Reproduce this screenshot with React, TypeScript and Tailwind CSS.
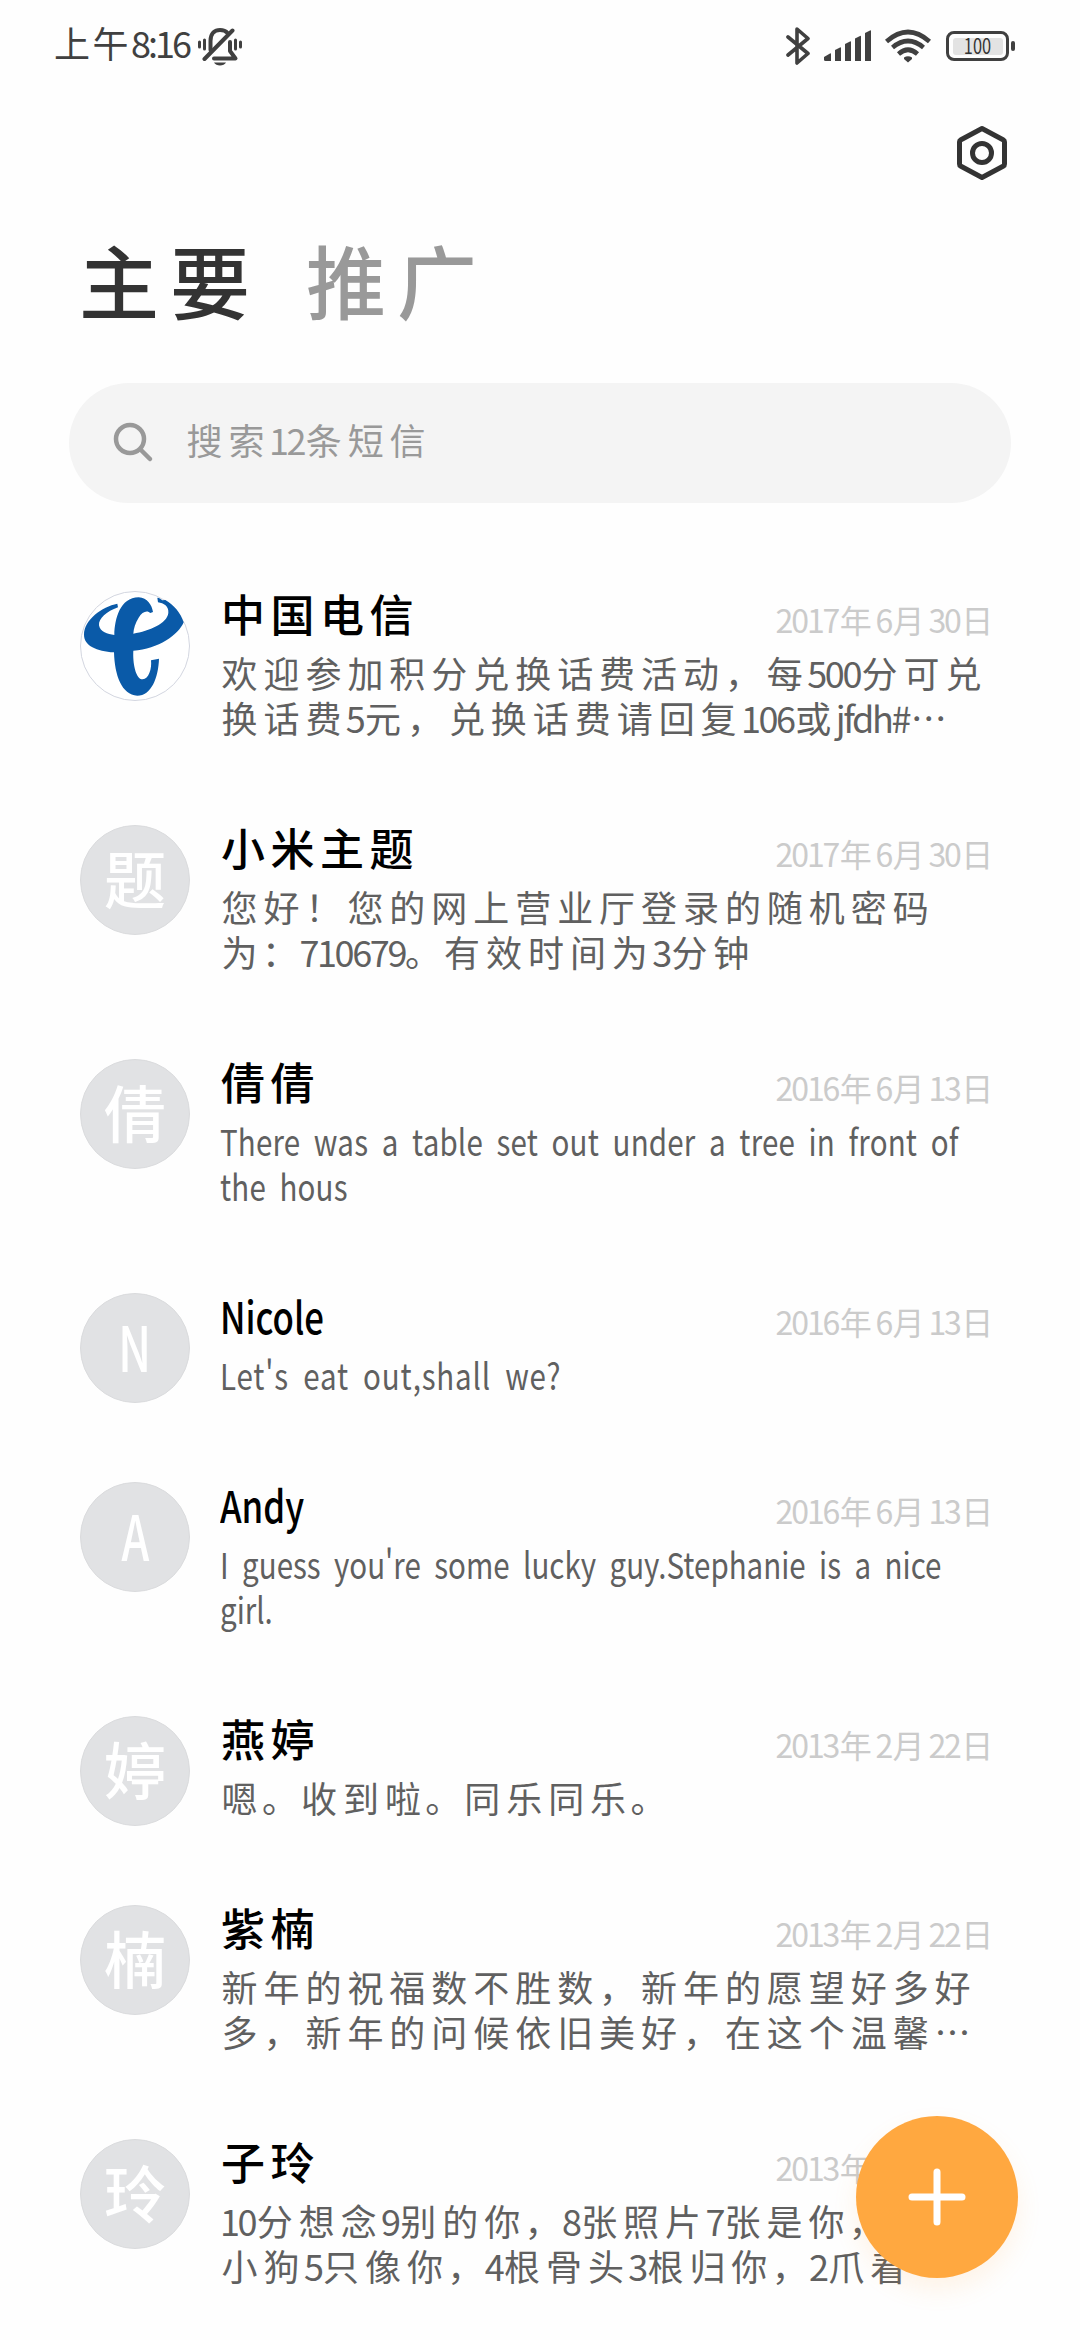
import React from 'react';

interface Thread {
    name: string;
    avatar: string;
    date: string;
    lines: string[];
    tracking?: string;
}

const threads: Thread[] = [
    {
        name: '中国电信',
        avatar: 'telecom',
        date: '2017年6月30日',
        lines: ['欢迎参加积分兑换话费活动，每500分可兑', '换话费5元，兑换话费请回复106或jfdh#…'],
    },
    {
        name: '小米主题',
        avatar: '题',
        date: '2017年6月30日',
        lines: ['您好！您的网上营业厅登录的随机密码', '为：710679。有效时间为3分钟'],
    },
    {
        name: '倩倩',
        avatar: '倩',
        date: '2016年6月13日',
        lines: ['There was a table set out under a tree in front of', 'the hous'],
        tracking: 'tracking-[0.2px]',
    },
    {
        name: 'Nicole',
        avatar: 'N',
        date: '2016年6月13日',
        lines: ["Let's eat out,shall we?"],
        tracking: 'tracking-[1px]',
    },
    {
        name: 'Andy',
        avatar: 'A',
        date: '2016年6月13日',
        lines: ["I guess you're some lucky guy.Stephanie is a nice", 'girl.'],
        tracking: 'tracking-normal',
    },
    { name: '燕婷', avatar: '婷', date: '2013年2月22日', lines: ['嗯。收到啦。同乐同乐。'] },
    {
        name: '紫楠',
        avatar: '楠',
        date: '2013年2月22日',
        lines: ['新年的祝福数不胜数，新年的愿望好多好', '多，新年的问候依旧美好，在这个温馨…'],
    },
    {
        name: '子玲',
        avatar: '玲',
        date: '2013年2月22日',
        lines: ['10分想念9别的你，8张照片7张是你，6只', '小狗5只像你，4根骨头3根归你，2爪着…'],
    },
];

const isLatin = (s: string) => /^[\x20-\x7e]+$/.test(s);

// Chinese is spaced wide, digits and letters inside it are set tight,
// full stops and colons get a little less room than a character
const trackingFor = (part: string) => {
    if (isLatin(part)) return 'tracking-[-0.066em]';
    if (/^[。：，]$/.test(part)) return 'tracking-[0.04em]';
    return 'tracking-[0.165em] ml-[0.045em] -mr-[0.045em]';
};

const Mixed: React.FC<{ text: string }> = ({ text }) => (
    <>
        {text.split(/([\x20-\x7e]+|[。：]|，(?=\d))/).filter(Boolean).map((part, i) => (
            <span key={i} className={trackingFor(part)}>{part}</span>
        ))}
    </>
);

const TelecomLogo = () => (
    <svg viewBox="60 62 330 330" className="w-[110px] h-[110px]">
        <circle cx="225" cy="227" r="163.5" fill="#fff" stroke="#d3d6e0" strokeWidth="3" />
        <path
            fill="#0a5aa8"
            d="M172 100L174 111C140 123 115 145 117 165C120 185 143 192 163 194C164 145 180 82 236 81C262 82 276 105 279 125L271 128C262 118 246 124 236 142C226 158 221 174 220 190C268 182 321 160 325 128C327 108 311 98 294 96L292 82C299 83 303 86 307 90L316 89C342 104 361 126 371 156C355 194 296 236 220 241C218 275 226 327 248 327C266 327 276 295 273 270L297 265C295 322 274 376 232 376C185 374 164 315 162 246C110 243 72 226 72 193C72 148 126 109 172 100Z"
        />
    </svg>
);

const StatusBar = () => (
    <div className="flex h-[88px] items-center pl-[54px] pr-[65px] text-[#404040]">
        <div className="flex-1 flex items-center">
            <span className="text-[36px] leading-[44px] w-[144px] whitespace-nowrap -mt-1">
                <span className="tracking-[2.5px]">上午</span>
                <span className="tracking-[-3px]">8:16</span>
            </span>
            <svg viewBox="0 0 44 38" className="w-[44px] h-[38px] mt-[6px]" fill="none" stroke="currentColor" strokeLinecap="round" strokeWidth="3">
                <path d="M1.5 14v5M6.5 12v9M37.5 12v9M42.5 14v5" />
                <path strokeWidth="4" d="M12.5 22V13C12.5 5 17 2 22 2c3.500 0 6 1.200 7.500 3" />
                <path strokeWidth="4" d="M6.500 31L34.500 2.500" />
                <path strokeWidth="4" strokeLinejoin="round" d="M32 14v9l5.500 7.500H16" />
                <path d="M16 34.500h12c-2 4-10 4-12 0z" fill="currentColor" stroke="none" />
            </svg>
        </div>
        <div className="flex items-center mt-1">
            <svg viewBox="0 0 24 38" className="w-[24px] h-[38px]" fill="none" stroke="currentColor" strokeWidth="3.6" strokeLinecap="round" strokeLinejoin="round">
                <path d="M2 10l20 16.500L11 36V2l11 9.500L2 28" />
            </svg>
            <svg viewBox="0 0 48 32" className="w-[48px] h-[32px] ml-[14px]" fill="currentColor">
                <path d="M0 27l6-3.500q1-.5 1 .5v7H1.500Q0 31 0 29.500z" />
                <path d="M11 20l5-2.500q1-.5 1 .5v13h-6z" />
                <path d="M21 14l5-2.500q1-.5 1 .5v19h-6z" />
                <path d="M31 8.500l5-2.500q1-.5 1 .5V31h-6z" />
                <path d="M41 3l5-2.500q1-.5 1 .5v30h-6z" />
            </svg>
            <svg viewBox="0 0 46 34" className="w-[46px] h-[34px] ml-[13px]" fill="none" stroke="currentColor" strokeWidth="4.6">
                <path d="M1.500 12.500Q23-6.500 44.500 12.500" />
                <path d="M7.500 18.500Q23 5.500 38.500 18.500" />
                <path d="M13.500 25Q23 16.500 32.500 25" />
                <path d="M19 28.500q4-2.500 8 0v1.500l-4 3.500-4-3.500z" fill="currentColor" stroke="none" />
            </svg>
            <div className="ml-[15px] w-[63px] h-[30px] rounded-[8px] border-[3px] border-[#404040] p-[3.5px]">
                <div className="w-full h-full rounded-[3px] bg-[#e3e3e3] flex items-center justify-center text-[21px] leading-none text-[#333]">
                    <span className="scale-x-[0.78] -mt-[2px]">100</span>
                </div>
            </div>
            <div className="ml-[2px] w-[4px] h-[10px] rounded-[2px] bg-[#404040]" />
        </div>
    </div>
);

const ThreadRow: React.FC<{ thread: Thread }> = ({ thread }) => {
    const latin = isLatin(thread.lines[0]);
    return (
        <li className="flex items-start pl-[80px] pr-[87px] pb-[65px]">
            <div className="mt-5 -mb-5 w-[110px] h-[110px] shrink-0">
                {thread.avatar === 'telecom' ? (
                    <TelecomLogo />
                ) : (
                    <div className="w-full h-full pb-[7px] rounded-full bg-[#e1e2e4] border border-[#dadbdd] flex items-center justify-center text-white text-[62px] leading-none font-medium">
                        <span className={isLatin(thread.avatar) ? 'scale-x-[0.72]' : ''}>{thread.avatar}</span>
                    </div>
                )}
            </div>
            <div className="ml-[30px] flex-1 min-w-0">
                <div className="flex h-[79px] items-center justify-between whitespace-nowrap">
                    <h2 className={`pt-[5px] text-[44px] leading-none font-medium text-black ${isLatin(thread.name) ? 'origin-left scale-x-[0.79]' : 'tracking-[5.5px] pl-[1px]'}`}>
                        {thread.name}
                    </h2>
                    <span className="pt-[16px] -mr-[4px] text-[32px] leading-none text-[#cbcbcb]"><Mixed text={thread.date} /></span>
                </div>
                {thread.lines.map((line) => (
                    <p key={line} className="h-[45px] text-[36px] leading-[45px] text-[#606060] whitespace-nowrap">
                        {latin ? (
                            <span className={`inline-block origin-left scale-x-[0.82] [word-spacing:8.3px] ${thread.tracking}`}>{line}</span>
                        ) : (
                            <Mixed text={line} />
                        )}
                    </p>
                ))}
            </div>
        </li>
    );
};

const App: React.FC = () => {
    return (
        <div lang="zh-CN" className="relative w-[1080px] h-[2340px] overflow-hidden bg-[#fefefe] font-['Noto_Sans_CJK_SC',sans-serif]">
            <StatusBar />

            <div className="flex h-[130px] items-center justify-end pr-[72px]">
                <svg viewBox="0 0 52 56" className="w-[52px] h-[56px]" fill="none" stroke="#333" strokeWidth="5" strokeLinejoin="round">
                    <path d="M26 3.500L47.500 15Q48.500 15.500 48.500 17V39Q48.500 40.500 47.500 41L26 52.500L4.500 41Q3.500 40.500 3.500 39V17Q3.500 15.500 4.500 15Z" />
                    <circle cx="26" cy="28" r="9.500" />
                </svg>
            </div>

            <div className="flex h-[133px] items-center pb-[13px] pl-[79px] gap-[45px] text-[80px] leading-none tracking-[11px] font-medium whitespace-nowrap">
                <h1 className="text-[#333]">主要</h1>
                <h1 className="text-[#999]">推广</h1>
            </div>

            <div className="mt-8 mx-[69px] h-[120px] rounded-full bg-[#f4f4f4] flex items-center pl-[44px]">
                <svg viewBox="0 0 42 42" className="w-[42px] h-[42px]" fill="none" stroke="#999" strokeWidth="4.5" strokeLinecap="round">
                    <circle cx="17" cy="17" r="14" />
                    <path d="M27.500 27.500L37 37" />
                </svg>
                <span className="ml-[30px] -mt-[9px] text-[36px] text-[#999] whitespace-nowrap"><Mixed text="搜索12条短信" /></span>
            </div>

            <ul className="mt-[68px]">
                {threads.map((t) => (
                    <ThreadRow key={t.name} thread={t} />
                ))}
            </ul>

            <button className="absolute left-[856px] top-[2116px] w-[162px] h-[162px] rounded-full bg-[#ffa840] flex items-center justify-center shadow-[0_12px_24px_rgba(255,168,64,0.12)]">
                <svg viewBox="0 0 58 58" className="w-[58px] h-[58px]" fill="none" stroke="#fff" strokeWidth="7" strokeLinecap="round">
                    <path d="M29 4v50M4 29h50" />
                </svg>
            </button>
        </div>
    );
};

export default App;
